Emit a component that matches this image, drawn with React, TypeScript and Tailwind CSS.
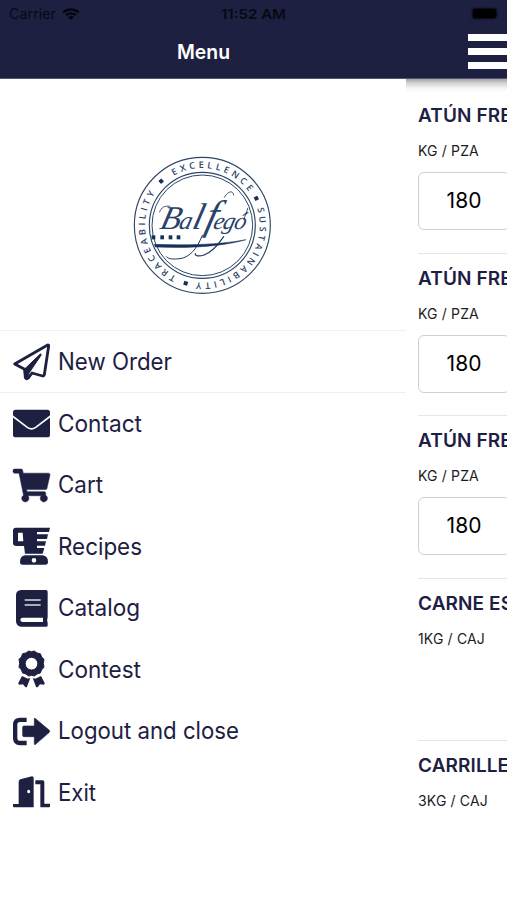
import React from "react";
import { FaShoppingCart } from "react-icons/fa";

const NAVY = "#1e2042";

type IconProps = { className?: string };

function PaperPlane({ className }: IconProps) {
  return (
    <svg viewBox="15 7 111 111" className={className}>
      <path
        d="M119 13L20 70L50 86L52 111Q55 117 61 112L72 97L104 106Q108 106 109 102L122 16Q122 12 119 13Z"
        fill="none"
        stroke={NAVY}
        strokeWidth="8.5"
        strokeLinejoin="round"
      />
      <path
        d="M48 87L97 40Q101 40 99 44L63 97L59 112L51 112Z"
        fill={NAVY}
        stroke={NAVY}
        strokeWidth="3"
        strokeLinejoin="round"
      />
    </svg>
  );
}

function Envelope({ className }: IconProps) {
  return (
    <svg viewBox="15 193 111 111" className={className}>
      <rect x="15" y="207" width="111" height="83" rx="8" fill={NAVY} />
      <path
        d="M13 226L58 260Q70.500 269 83 260L128 226"
        fill="none"
        stroke="#fff"
        strokeWidth="5"
      />
    </svg>
  );
}

function Cart({ className }: IconProps) {
  return <FaShoppingCart className={className} color={NAVY} strokeWidth={8} />;
}

function Blender({ className }: IconProps) {
  return (
    <svg viewBox="15 196 111 111" className={className} fill={NAVY}>
      <path
        fillRule="evenodd"
        d="M23 195H126L123 208H87V215H120L117 229H87V236H114L111 249H87V256H109L104 273H51L48 250H25Q15 250 15 240V204Q15 195 23 195ZM30 210V236H46L44 210Z"
      />
      <path
        fillRule="evenodd"
        d="M51 278H104Q120 280 120 298Q120 306 112 306H44Q36 306 36 298Q36 280 51 278ZM78 286A7 7 0 1 0 78 300A7 7 0 1 0 78 286Z"
      />
    </svg>
  );
}

function Book({ className }: IconProps) {
  return (
    <svg viewBox="15 381 111 111" className={className}>
      <path
        d="M40 381H114Q119 381 119 386V463Q116 470 119 481V488Q119 491 114 491H40Q24 490 24 474V397Q24 382 40 381Z"
        fill={NAVY}
      />
      <path d="M43 464H105V477H43Q37 476 37 470.500Q37 465 43 464Z" fill="#fff" />
      <path d="M50 411H98M50 426H98" stroke="#dcdce4" strokeWidth="4.500" />
    </svg>
  );
}

function Award({ className }: IconProps) {
  return (
    <svg viewBox="15 16 111 111" className={className} fill={NAVY}>
      <path d="M42 91Q51 95 56 98Q62 100 67 97L57 123Q55 127 51 123L45 116L34 117Q30 116 31 112Z" />
      <path d="M99 91Q90 95 85 98Q79 100 74 97L84 123Q86 127 90 123L96 116L107 117Q111 116 110 112Z" />
      <path
        fillRule="evenodd"
        stroke={NAVY}
        strokeWidth="3"
        strokeLinejoin="round"
        d="M70.500 18L79 16L87 22L97 24L101 34L108 41L106 53L108 65L101 72L97 82L87 85L79 91L70.500 89L62 91L54 85L44 82L40 72L33 65L35 53L33 41L40 34L44 24L54 22L62 16ZM70.500 35A19 19 0 1 0 70.500 73A19 19 0 1 0 70.500 35Z"
      />
    </svg>
  );
}

function Logout({ className }: IconProps) {
  return (
    <svg viewBox="15 201 111 111" className={className}>
      <path
        d="M56 221.500H36Q21.500 221.500 21.500 236V276Q21.500 291 36 291H56"
        fill="none"
        stroke={NAVY}
        strokeWidth="13"
      />
      <path
        d="M81 217L124 253Q126 256 124 259L81 296Q79 296 79 293V272H48Q44 272 44 268V244Q44 240 48 240H79V219Q79 216 81 217Z"
        fill={NAVY}
        stroke={NAVY}
        strokeWidth="2"
      />
    </svg>
  );
}

function Door({ className }: IconProps) {
  return (
    <svg viewBox="15 386 111 111" className={className} fill={NAVY}>
      <path
        fillRule="evenodd"
        d="M72 393Q77 393 77 398V486H18Q15 486 15 483V476H32V409Q32 404 37 402ZM62 433A4.500 5.500 0 1 0 62 444A4.500 5.500 0 1 0 62 433Z"
      />
      <path d="M82 405H104Q109 405 109 410V475H126V483Q126 486 123 486H97V417H82Z" />
    </svg>
  );
}

const menu: {
  label: string;
  icon: React.ComponentType<IconProps>;
  bordered?: boolean;
  width: number;
}[] = [
  { label: "New Order", icon: PaperPlane, bordered: true, width: 114 },
  { label: "Contact", icon: Envelope, width: 84 },
  { label: "Cart", icon: Cart, width: 45 },
  { label: "Recipes", icon: Blender, width: 84 },
  { label: "Catalog", icon: Book, width: 82 },
  { label: "Contest", icon: Award, width: 83 },
  { label: "Logout and close", icon: Logout, width: 181 },
  { label: "Exit", icon: Door, width: 38 },
];

const products: { name: string; unit: string; qty?: string }[] = [
  { name: "ATÚN FRESCO", unit: "KG / PZA", qty: "180" },
  { name: "ATÚN FRESCO", unit: "KG / PZA", qty: "180" },
  { name: "ATÚN FRESCO", unit: "KG / PZA", qty: "180" },
  { name: "CARNE ESPINA", unit: "1KG / CAJ" },
  { name: "CARRILLERA", unit: "3KG / CAJ" },
];

const CX = 232;
const CY = 232;

function point(angle: number, r: number) {
  const a = (angle * Math.PI) / 180;
  return `${(CX + r * Math.sin(a)).toFixed(2)} ${(CY - r * Math.cos(a)).toFixed(2)}`;
}

function RingWord({ id, text, from, to }: { id: string; text: string; from: number; to: number }) {
  const r = 172;
  const length = (r * (to - from) * Math.PI) / 180;
  return (
    <>
      <path
        id={id}
        fill="none"
        d={`M${point(from, r)}A${r} ${r} 0 0 1 ${point(to + 6, r)}`}
      />
      <text fontFamily="'Open Sans', sans-serif" fontWeight="600" fontSize="27" fill="#2c4566">
        <textPath href={`#${id}`} textLength={length} lengthAdjust="spacing">
          {text}
        </textPath>
      </text>
    </>
  );
}

function Logo() {
  return (
    <svg viewBox="0 0 465 465" className="h-[155px] w-[155px]" role="img" aria-label="Balfegó">
      <g fill="none" stroke="#2c4566">
        <circle cx={CX} cy={CY} r="204" strokeWidth="3.4" />
        <circle cx={CX} cy={CY} r="159" strokeWidth="3.4" />
        <circle cx={CX} cy={CY} r="151" strokeWidth="3" />
      </g>
      <RingWord id="ring-excellence" text="EXCELLENCE" from={-30} to={54} />
      <RingWord id="ring-sustainability" text="SUSTAINABILITY" from={73} to={186} />
      <RingWord id="ring-traceability" text="TRACEABILITY" from={207} to={304} />
      {[-43, 63.5, 196].map((a) => (
        <rect
          key={a}
          x={CX - 6}
          y={CY - 187}
          width="12"
          height="12"
          fill="#16305a"
          transform={`rotate(${a} ${CX} ${CY})`}
        />
      ))}
      <text
        fill="#2a426a"
        fontFamily="'Liberation Serif', serif"
        fontStyle="italic"
        transform="translate(0 242) skewX(-14)"
      >
        <tspan x="101" fontSize="100">B</tspan>
        <tspan x="159" fontSize="76">a</tspan>
        <tspan x="198" fontSize="112">l</tspan>
        <tspan x="236" fontSize="124">f</tspan>
        <tspan x="262" fontSize="72">e</tspan>
        <tspan x="290" fontSize="72">g</tspan>
        <tspan x="324" fontSize="72">ó</tspan>
      </text>
      <g fill="none" stroke="#1d3660" strokeLinecap="round">
        <path d="M326 141C324 125 308 130 298 148" strokeWidth="2.5" />
        <path d="M232 262C216 303 194 328 165 332C145 334 130 334 124 326" strokeWidth="3" />
        <path d="M296 266C280 290 259 314 237 321C222 326 209 324 211 317" strokeWidth="3.5" />
        <path d="M104 192C108 178 120 172 134 175" strokeWidth="2.5" />
        <path d="M356 214C362 202 366 191 368 181" strokeWidth="2.5" />
      </g>
      <path
        d="M88 289C178 292 280 291 363 275C299 294 197 302 91 297Z"
        fill="#16305a"
        stroke="#16305a"
        strokeWidth="1.5"
      />
      {[80, 106, 131, 155].map((x) => (
        <rect key={x} x={x} y="262" width="11" height="12" fill="#16305a" />
      ))}
    </svg>
  );
}

function WifiGlyph() {
  return (
    <svg viewBox="0 0 18 14" className="h-[14px] w-[18px]" fill="#05060c">
      <path d="M0.4 4.5C5 .2 13 .2 17.6 4.5L15.9 6.3C12 2.9 6 2.9 2.1 6.3Z" />
      <path d="M3.2 7.3C6.4 4.4 11.6 4.4 14.8 7.3L13 9.1C10.7 7.2 7.3 7.2 5 9.1Z" />
      <path d="M6.1 10.2C7.8 8.7 10.2 8.7 11.9 10.2L9 13.1Z" />
    </svg>
  );
}

/* Fits a label to a fixed advance width. */
function Fit({
  text,
  width,
  size,
  weight = 400,
  height,
  color,
}: {
  text: string;
  width: number;
  size: number;
  weight?: number;
  height: number;
  color: string;
}) {
  return (
    <svg width={width} height={height} className="block shrink-0 overflow-visible">
      <text
        x="0"
        y={height / 2 + size * 0.364}
        fontFamily="Inter, sans-serif"
        fontSize={size}
        fontWeight={weight}
        fill={color}
        textLength={width}
        lengthAdjust="spacingAndGlyphs"
      >
        {text}
      </text>
    </svg>
  );
}

export default function App() {
  return (
    <div className="flex h-[900px] w-[507px] flex-col overflow-hidden bg-white font-['Inter',sans-serif] text-[#1e2042]">
      <header className="flex h-[79px] shrink-0 flex-col border-b border-[#55566f] bg-[#1e2042]">
        <div className="grid h-[27px] grid-cols-3 items-center pl-[9px] pr-[11px] text-[#070811]">
          <div className="flex items-center gap-1.5">
            <Fit text="Carrier" width={47} size={14} height={20} color="#070811" />
            <WifiGlyph />
          </div>
          <div className="flex justify-center pl-[3px]">
            <Fit text="11:52 AM" width={65} size={13.5} weight={600} height={20} color="#070811" />
          </div>
          <div className="flex justify-end">
            <div className="h-[9px] w-[23px] rounded-[2px] bg-black shadow-[0_0_2px_1px_#080914]" />
          </div>
        </div>
        <div className="flex h-[50px] items-center justify-between">
          <div className="flex w-[406px] justify-center">
            <Fit text="Menu" width={53} size={20} weight={600} height={50} color="#ffffff" />
          </div>
          <div className="-mt-px flex w-[39px] flex-col gap-[7px]">
            <span className="h-[7px] bg-white" />
            <span className="h-[7px] bg-white" />
            <span className="h-[7px] bg-white" />
          </div>
        </div>
      </header>

      <div className="flex min-h-0 flex-1">
        <aside className="w-[406px] shrink-0 bg-white">
          <div className="flex h-[251px] justify-center pr-[2px] pt-[69px]">
            <Logo />
          </div>
          <nav>
            {menu.map(({ label, icon: Icon, bordered, width }) => (
              <a
                key={label}
                className={
                  bordered
                    ? "flex h-[63px] items-center border-y border-[#f0f0f1] pb-px pl-[13px]"
                    : "flex h-[61.5px] items-center pb-[2px] pl-[13px] *:first:mt-[2px]"
                }
              >
                <Icon className="mr-[8px] h-[37px] w-[37px] shrink-0 overflow-visible" />
                <Fit text={label} width={width} size={23.7} height={40} color={NAVY} />
              </a>
            ))}
          </nav>
        </aside>

        <main className="min-w-0 flex-1 overflow-hidden bg-[linear-gradient(to_bottom,#a3a3a6_0px,#d2d2d3_4px,#f3f3f3_9px,#ffffff_13px)] bg-no-repeat pl-3">
          {products.map((p, i) => (
            <section
              key={i}
              className="h-[162.5px] w-[300px] border-t border-[#e6e6e6] pt-[13px] first:mt-[11px] first:border-transparent"
            >
              <h2 className="h-6 whitespace-nowrap text-[19px] font-semibold leading-6 tracking-[0.1px] text-[#1e2042]">
                {p.name}
              </h2>
              <p className="mt-[13px] h-5 text-[14px] leading-5 tracking-[0.15px] text-[#1c1c1e]">{p.unit}</p>
              {p.qty && (
                <div className="mt-[11px] flex h-[58px] w-[92px] items-center justify-center rounded-[6px] border border-[#d0d0d2] text-[21px] text-black">
                  {p.qty}
                </div>
              )}
            </section>
          ))}
        </main>
      </div>
    </div>
  );
}
